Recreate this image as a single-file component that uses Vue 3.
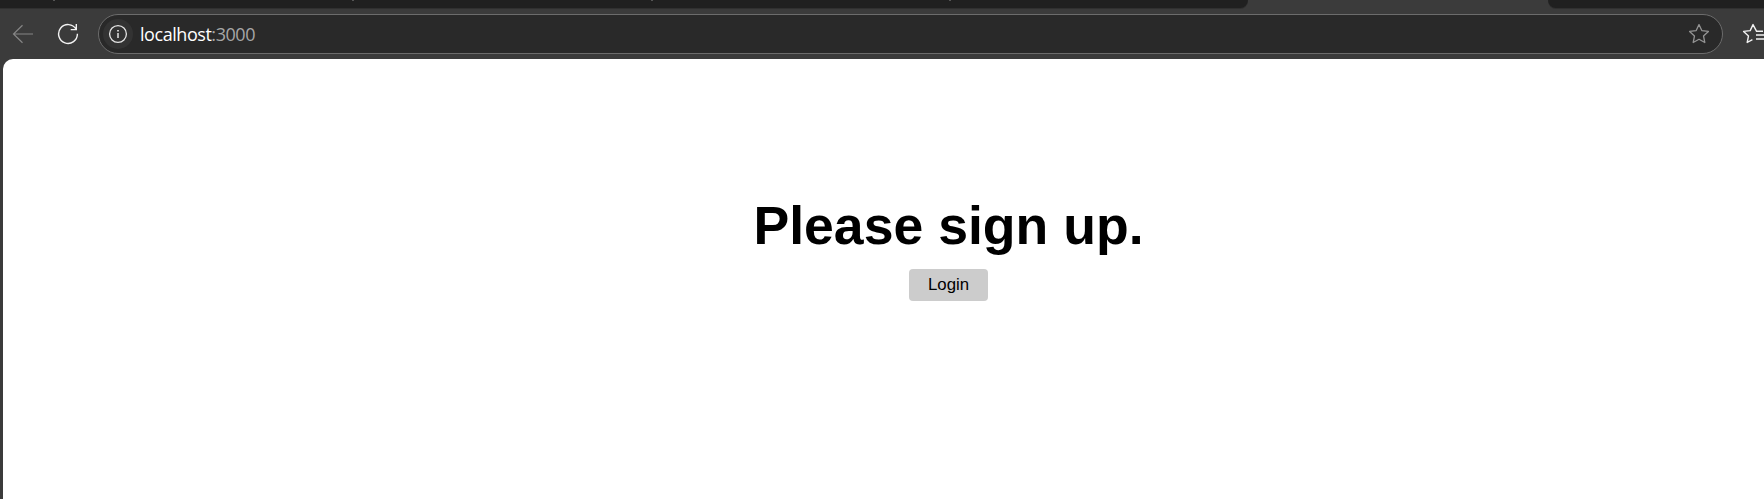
<script setup>
const tabMarks = [1, 2, 3, 4]
</script>

<template>
  <div class="browser">
    <div class="tabs">
      <div class="strip strip-left">
        <i v-for="m in tabMarks" :key="m" class="mark" :class="'mark-' + m"></i>
      </div>
      <div class="strip strip-right"></div>
    </div>
    <div class="toolbar">
      <svg class="back" width="22" height="20" viewBox="0 0 22 20" fill="none" stroke="#858585" stroke-width="1.2">
        <path d="M10.5 1.3 1.5 10l9 8.7M1.5 10H21" />
      </svg>
      <svg class="reload" width="22" height="22" viewBox="0 0 22 22" fill="none" stroke="#f2f2f2" stroke-width="1.4">
        <path d="M19.1 6.2A9.4 9.4 0 1 0 20.4 10.8M19.3 1v5.6h-5.6" />
      </svg>
      <div class="address">
        <span class="info">
          <svg width="20" height="20" viewBox="0 0 20 20" fill="none" stroke="#e4e4e4" stroke-width="1.3">
            <circle cx="10" cy="10" r="8.4" />
            <path d="M10 9v5" stroke-width="1.5" />
            <path d="M10 6v1.6" stroke-width="1.7" />
          </svg>
        </span>
        <span class="url">localhost<span class="port">:3000</span></span>
        <svg class="star" width="22" height="22" viewBox="0 0 22 22" fill="none" stroke="#949494" stroke-width="1.3" stroke-linejoin="round">
          <path d="M11 1.6l2.8 6 6.6.8-4.9 4.5 1.3 6.6L11 16.3l-5.8 3.2 1.3-6.6L1.6 8.4l6.6-.8z" />
        </svg>
      </div>
      <svg class="favorites" width="22" height="22" viewBox="0 0 22 22" fill="none" stroke="#f2f2f2" stroke-width="1.4" stroke-linejoin="round">
        <path d="M21 8.3h-6.4L11 1.6 8.2 7.6l-6.6.8 4.9 4.5-1.3 6.6 5.2-2.9M14 12h8M14 16h8" />
      </svg>
    </div>
    <main class="page">
      <h1>Please sign up.</h1>
      <button type="button">Login</button>
    </main>
  </div>
</template>

<style>
body {
  margin: 0;
  overflow: hidden;
}
</style>

<style scoped>
.browser {
  width: 1764px;
  height: 499px;
  display: flex;
  flex-direction: column;
  overflow: hidden;
  background: #3b3b3b;
}
.tabs {
  height: 8px;
  flex: none;
  display: flex;
  justify-content: space-between;
}
.strip {
  position: relative;
  background: #202020;
  box-shadow: 0 1px 0 #303030;
}
.strip-left {
  width: 1248px;
  border-bottom-right-radius: 8px;
}
.strip-right {
  width: 216px;
  border-bottom-left-radius: 8px;
}
.mark {
  position: absolute;
  top: 0;
  width: 2px;
  height: 1px;
  background: #555;
}
.mark-1 { left: 53px; }
.mark-2 { left: 352px; }
.mark-3 { left: 651px; }
.mark-4 { left: 949px; }
.toolbar {
  height: 51px;
  flex: none;
  display: flex;
  align-items: center;
  box-sizing: border-box;
  padding: 0 0 0 12px;
}
.toolbar svg {
  flex: none;
  display: block;
}
.reload {
  margin-left: 23px;
}
.address {
  width: 1625px;
  height: 40px;
  margin-left: 19px;
  flex: none;
  box-sizing: border-box;
  border: 1px solid #6c6c6c;
  border-radius: 20px;
  background: #292929;
  display: flex;
  align-items: center;
  padding: 0 12px 0 4px;
}
.info {
  width: 30px;
  height: 30px;
  border-radius: 50%;
  background: #333;
  display: flex;
  align-items: center;
  justify-content: center;
}
.url {
  margin-left: 7px;
  font: 18px/24px "Open Sans", "Noto Sans", sans-serif;
  letter-spacing: -0.45px;
  color: #fff;
}
.port {
  color: #a6a6a6;
}
.star {
  margin-left: auto;
}
.favorites {
  margin-left: 19px;
}
.page {
  flex: 1;
  margin-left: 3px;
  border-top-left-radius: 10px;
  background: #fff;
  display: flex;
  flex-direction: column;
  align-items: center;
  padding: 135px 0 0 130px;
  font-family: "Liberation Sans", Arial, sans-serif;
}
h1 {
  margin: 0;
  font-size: 53.6px;
  line-height: 62px;
  font-weight: 700;
  color: #000;
}
button {
  width: 79px;
  height: 32px;
  margin-top: 13px;
  padding: 0;
  border: 0;
  border-radius: 4px;
  background: #ccc;
  color: #000;
  font: 16.8px/32px "Liberation Sans", Arial, sans-serif;
}
</style>
